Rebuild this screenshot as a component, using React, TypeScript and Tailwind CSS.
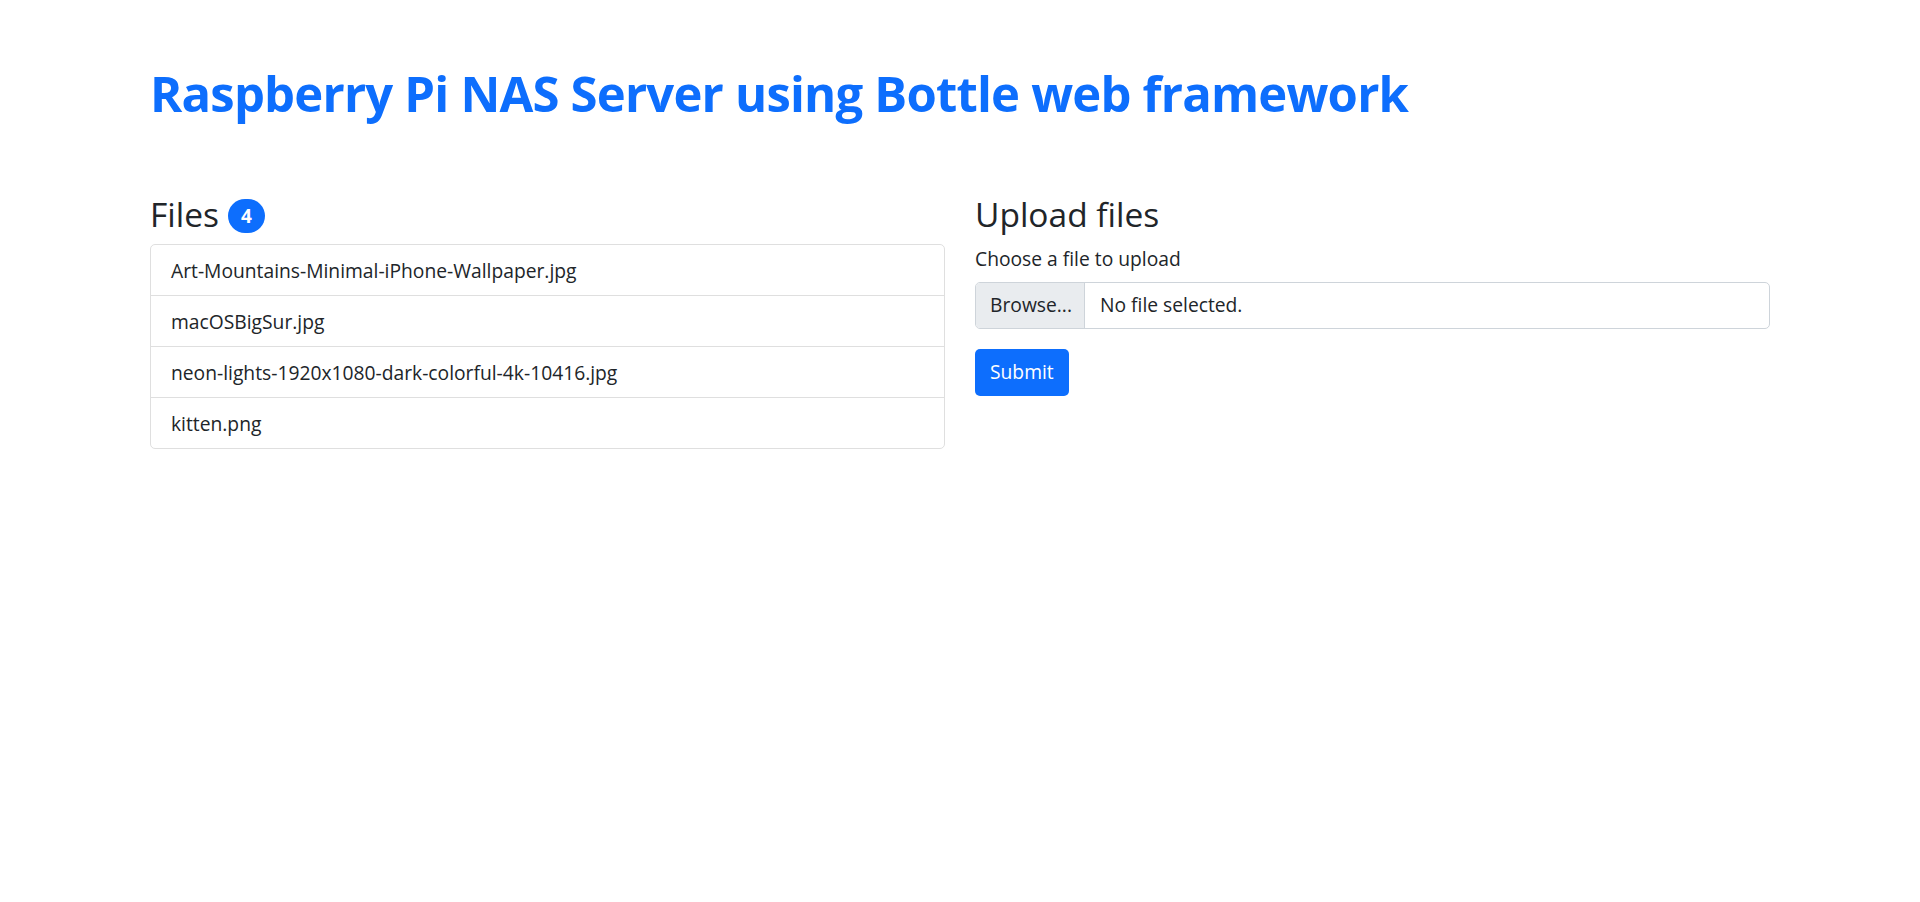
const files = [
  'Art-Mountains-Minimal-iPhone-Wallpaper.jpg',
  'macOSBigSur.jpg',
  'neon-lights-1920x1080-dark-colorful-4k-10416.jpg',
  'kitten.png',
];

export default function App() {
  return (
    <div className="min-h-screen bg-white font-['Open_Sans',sans-serif] text-[#212529]">
      <div className="mx-auto w-[1650px] px-[15px] pt-[57px]">
        <h1 className="mb-[61px] text-[49px] font-bold leading-[72px] tracking-[-0.8px] text-[#0d6efd]">
          Raspberry Pi NAS Server using Bottle web framework
        </h1>

        <div className="grid grid-cols-2 gap-[30px]">
          {/* File list */}
          <div>
            <h3 className="mb-[9px] flex items-center pt-[3px] text-[33.5px] leading-[42px]">
              Files
              <span className="ml-[9px] mt-[4px] flex h-[34px] w-[37px] items-center justify-center rounded-full bg-[#0d6efd] text-[19px] font-bold leading-none text-white">
                4
              </span>
            </h3>
            <ul className="rounded-[5px] border border-[#dfdfdf]">
              {files.map((f, i) => (
                <li
                  key={f}
                  className={`px-[20px] pb-[9px] pt-[11px] text-[19.25px] leading-[30px] ${i > 0 ? 'border-t border-[#dfdfdf]' : ''}`}
                >
                  {f}
                </li>
              ))}
            </ul>
          </div>

          {/* Upload form */}
          <div>
            <h3 className="mb-[7px] pt-[3px] text-[33.5px] leading-[42px]">Upload files</h3>
            <label className="mb-[8px] block pt-[2px] text-[19.25px] leading-[30px]">Choose a file to upload</label>
            <div className="mb-[20px] flex h-[47px] overflow-hidden rounded-[5px] border border-[#ced4da] text-[19.25px]">
              <span className="flex items-center border-r border-[#ced4da] bg-[#e9ecef] pl-[14px] pr-[12px]">Browse...</span>
              <span className="flex items-center px-[15px]">No file selected.</span>
            </div>
            <button className="h-[47px] rounded-[5px] bg-[#0d6efd] px-[15px] text-[19.25px] text-white">
              Submit
            </button>
          </div>
        </div>
      </div>
    </div>
  );
}
